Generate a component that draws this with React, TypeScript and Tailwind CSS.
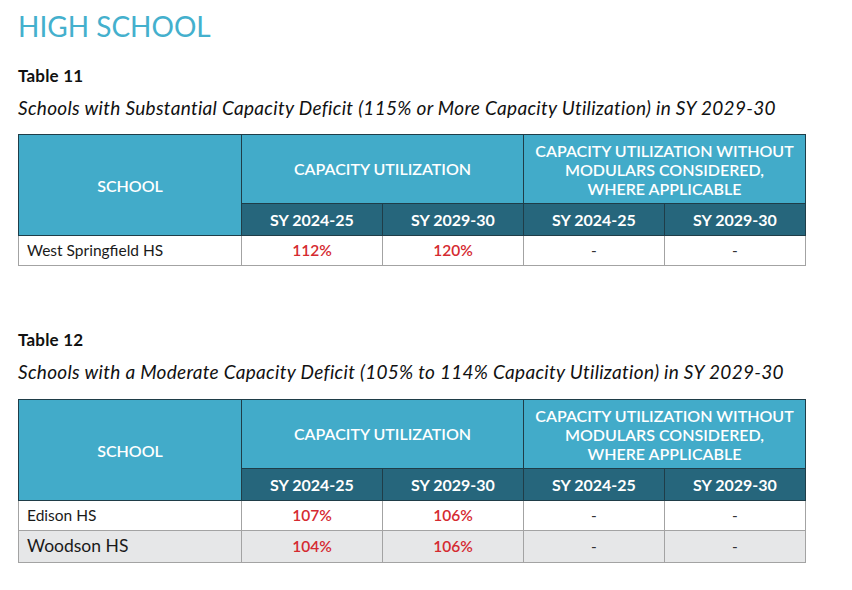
const font = "font-['Lato','Open_Sans',sans-serif]";

type Row = { school: string; a: string; b: string; c: string; d: string };

const hdLight = 'bg-[#42abc9] text-white font-semibold text-[16px] border border-[#1f3d48]';
const hdDark = 'bg-[#26667c] text-white font-bold text-[16px] border border-[#1f3d48]';
const cell = 'border border-[#a3a3a3] text-center';

function CapacityTable({ rows }: { rows: Row[] }) {
  return (
    <table className="w-[787px] border-collapse table-fixed text-[15.5px]">
      <colgroup>
        <col className="w-[223px]" />
        <col className="w-[141px]" />
        <col className="w-[141px]" />
        <col className="w-[141px]" />
        <col className="w-[141px]" />
      </colgroup>
      <thead>
        <tr className="h-[69px]">
          <th rowSpan={2} className={`${hdLight} pt-[2px]`}>
            SCHOOL
          </th>
          <th colSpan={2} className={hdLight}>
            CAPACITY UTILIZATION
          </th>
          <th colSpan={2} className={`${hdLight} leading-[19px]`}>
            CAPACITY UTILIZATION WITHOUT
            <br />
            MODULARS CONSIDERED,
            <br />
            WHERE APPLICABLE
          </th>
        </tr>
        <tr className="h-[32px]">
          <th className={hdDark}>SY 2024-25</th>
          <th className={hdDark}>SY 2029-30</th>
          <th className={hdDark}>SY 2024-25</th>
          <th className={hdDark}>SY 2029-30</th>
        </tr>
      </thead>
      <tbody>
        {rows.map((r, i) => (
          <tr key={r.school} className={i % 2 === 1 ? 'h-[32px] bg-[#e6e7e8]' : 'h-[30px] bg-white'}>
            <td className={`border border-[#a3a3a3] pl-2 text-[#1a1a1a] ${i % 2 === 1 ? 'text-[17.5px]' : ''}`}>
              {r.school}
            </td>
            <td className={`${cell} text-[#d52a30] font-semibold`}>{r.a}</td>
            <td className={`${cell} text-[#d52a30] font-semibold`}>{r.b}</td>
            <td className={`${cell} text-[#333]`}>{r.c}</td>
            <td className={`${cell} text-[#333]`}>{r.d}</td>
          </tr>
        ))}
      </tbody>
    </table>
  );
}

export default function App() {
  return (
    <div className={`${font} bg-white w-[852px] h-[590px] pl-[18px] pt-[8px] text-[#111]`}>
      <h1 className="text-[28px] leading-[36px] text-[#44b0cd] font-normal">HIGH SCHOOL</h1>

      <div className="mt-[22px] text-[17px] font-bold leading-[20px] tracking-[0.2px]">Table 11</div>
      <div className="mt-[10px] text-[19px] italic leading-[24px] tracking-[0.3px]">
        Schools with Substantial Capacity Deficit (115% or More Capacity Utilization) in SY 2029-30
      </div>
      <div className="mt-[14px]">
        <CapacityTable rows={[{ school: 'West Springfield HS', a: '112%', b: '120%', c: '-', d: '-' }]} />
      </div>

      <div className="mt-[64px] text-[17px] font-bold leading-[20px] tracking-[0.2px]">Table 12</div>
      <div className="mt-[10px] text-[19px] italic leading-[24px] tracking-[0.3px]">
        Schools with a Moderate Capacity Deficit (105% to 114% Capacity Utilization) in SY 2029-30
      </div>
      <div className="mt-[15px]">
        <CapacityTable
          rows={[
            { school: 'Edison HS', a: '107%', b: '106%', c: '-', d: '-' },
            { school: 'Woodson HS', a: '104%', b: '106%', c: '-', d: '-' },
          ]}
        />
      </div>
    </div>
  );
}
